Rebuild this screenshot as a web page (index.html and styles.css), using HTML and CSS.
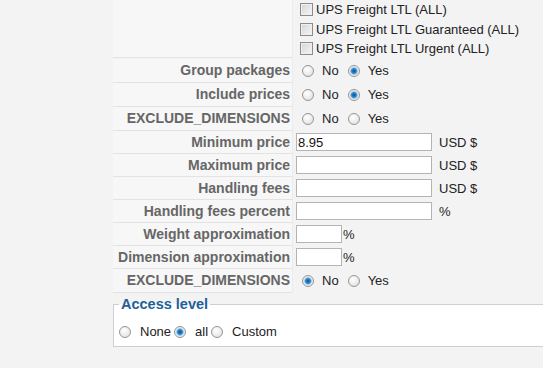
FILE: index.html
```html
<!DOCTYPE html>
<html lang="en">
<head>
    <title>Shipping method parameters</title>
    <meta charset="UTF-8">
    <link rel="stylesheet" href="styles.css">
</head>
<body>
    <div class="params">
        <div class="row row-top">
            <div class="key"></div>
            <div class="val checks">
                <label class="check"><input type="checkbox"> UPS Freight LTL (ALL)</label>
                <label class="check"><input type="checkbox"> UPS Freight LTL Guaranteed (ALL)</label>
                <label class="check"><input type="checkbox"> UPS Freight LTL Urgent (ALL)</label>
            </div>
        </div>

        <div class="row row-radio">
            <div class="key">Group packages</div>
            <div class="val radios">
                <label class="opt"><input type="radio" name="group"> No</label>
                <label class="opt"><input type="radio" name="group" checked> Yes</label>
            </div>
        </div>
        <div class="row row-radio">
            <div class="key">Include prices</div>
            <div class="val radios">
                <label class="opt"><input type="radio" name="prices"> No</label>
                <label class="opt"><input type="radio" name="prices" checked> Yes</label>
            </div>
        </div>
        <div class="row row-radio">
            <div class="key">EXCLUDE_DIMENSIONS</div>
            <div class="val radios">
                <label class="opt"><input type="radio" name="excl1"> No</label>
                <label class="opt"><input type="radio" name="excl1"> Yes</label>
            </div>
        </div>

        <div class="row row-input">
            <div class="key">Minimum price</div>
            <div class="val fields">
                <input type="text" class="wide" value="8.95">
                <span class="unit">USD $</span>
            </div>
        </div>
        <div class="row row-input">
            <div class="key">Maximum price</div>
            <div class="val fields">
                <input type="text" class="wide">
                <span class="unit">USD $</span>
            </div>
        </div>
        <div class="row row-input">
            <div class="key">Handling fees</div>
            <div class="val fields">
                <input type="text" class="wide">
                <span class="unit">USD $</span>
            </div>
        </div>
        <div class="row row-input">
            <div class="key">Handling fees percent</div>
            <div class="val fields">
                <input type="text" class="wide">
                <span class="unit">%</span>
            </div>
        </div>
        <div class="row row-input">
            <div class="key">Weight approximation</div>
            <div class="val fields">
                <input type="text" class="short">
                <span class="unit tight">%</span>
            </div>
        </div>
        <div class="row row-input">
            <div class="key">Dimension approximation</div>
            <div class="val fields">
                <input type="text" class="short">
                <span class="unit tight">%</span>
            </div>
        </div>

        <div class="row row-radio">
            <div class="key">EXCLUDE_DIMENSIONS</div>
            <div class="val radios">
                <label class="opt"><input type="radio" name="excl2" checked> No</label>
                <label class="opt"><input type="radio" name="excl2"> Yes</label>
            </div>
        </div>

        <fieldset class="access">
            <legend>Access level</legend>
            <div class="access-opts">
                <label class="opt"><input type="radio" name="access"> None</label>
                <label class="opt"><input type="radio" name="access" checked> all</label>
                <label class="opt"><input type="radio" name="access"> Custom</label>
            </div>
        </fieldset>
    </div>
</body>
</html>
```

FILE: styles.css
```css
* {
    margin: 0;
    padding: 0;
    box-sizing: border-box;
}

body {
    font-family: "Liberation Sans", Arial, sans-serif;
    font-size: 13px;
    color: #222;
    background-color: #f3f3f3;
    overflow: hidden;
}

.params {
    margin-left: 113px;
    width: 431px;
}

.row {
    display: flex;
}

.key {
    flex: none;
    width: 180px;
    display: flex;
    align-items: center;
    justify-content: flex-end;
    padding-right: 2px;
    background-color: #f7f7f7;
    border-bottom: 1px solid #e3e3e3;
    border-right: 1px solid #ececec;
    color: #666;
    font-size: 14px;
    font-weight: bold;
    white-space: nowrap;
}

.row-top .key {
    height: 58px;
}

.row-radio .key {
    height: 24px;
}

.row-input .key {
    height: 23px;
}

.val {
    display: flex;
    align-items: center;
    white-space: nowrap;
}

/* checkbox list */
.checks {
    flex-direction: column;
    align-items: flex-start;
    padding-left: 7px;
}

.check {
    display: flex;
    align-items: center;
    height: 19.5px;
}

.check input {
    appearance: none;
    width: 13px;
    height: 13px;
    margin-right: 3px;
    border: 1px solid #8c8c8c;
    background: linear-gradient(135deg, #d4d4d4, #f7f7f7);
    box-shadow: inset 0 0 0 1px #efefef;
}

/* radio groups */
.radios {
    padding-left: 9px;
}

.opt {
    display: flex;
    align-items: center;
    margin-right: 9px;
}

.opt input {
    appearance: none;
    flex: none;
    width: 12px;
    height: 12px;
    margin-right: 8px;
    border-radius: 50%;
    border: 1px solid #969696;
    background: radial-gradient(circle at 40% 35%, #ffffff, #dcdcdc);
}

.opt input:checked {
    background: radial-gradient(circle, #0d4f8e 0, #2c8fd6 2.5px, #9ec8e8 3.5px, #e8e8e8 4px, #f6f6f6 100%);
}

/* text fields */
.fields {
    padding-left: 3px;
}

.fields input {
    height: 18px;
    border: 1px solid #b4b4b4;
    background-color: #fff;
    padding: 0 1px;
    font-family: "Liberation Sans", Arial, sans-serif;
    font-size: 13px;
    color: #111;
}

.fields .wide {
    width: 136px;
}

.fields .short {
    width: 46px;
}

.unit {
    margin-left: 7px;
}

.unit.tight {
    margin-left: 1px;
}

/* access level box */
.access {
    margin-top: 3px;
    border: 1px solid #cfcfcf;
    background-color: #fff;
    padding: 10px 5px 5px;
}

.access legend {
    padding: 0 2px;
    color: #1f5f98;
    font-size: 14.5px;
    font-weight: bold;
    line-height: 17px;
}

.access-opts {
    display: flex;
    align-items: center;
    height: 18px;
}

.access-opts .opt {
    margin-right: 3px;
}

.access-opts .opt input {
    margin-right: 9px;
}
```
